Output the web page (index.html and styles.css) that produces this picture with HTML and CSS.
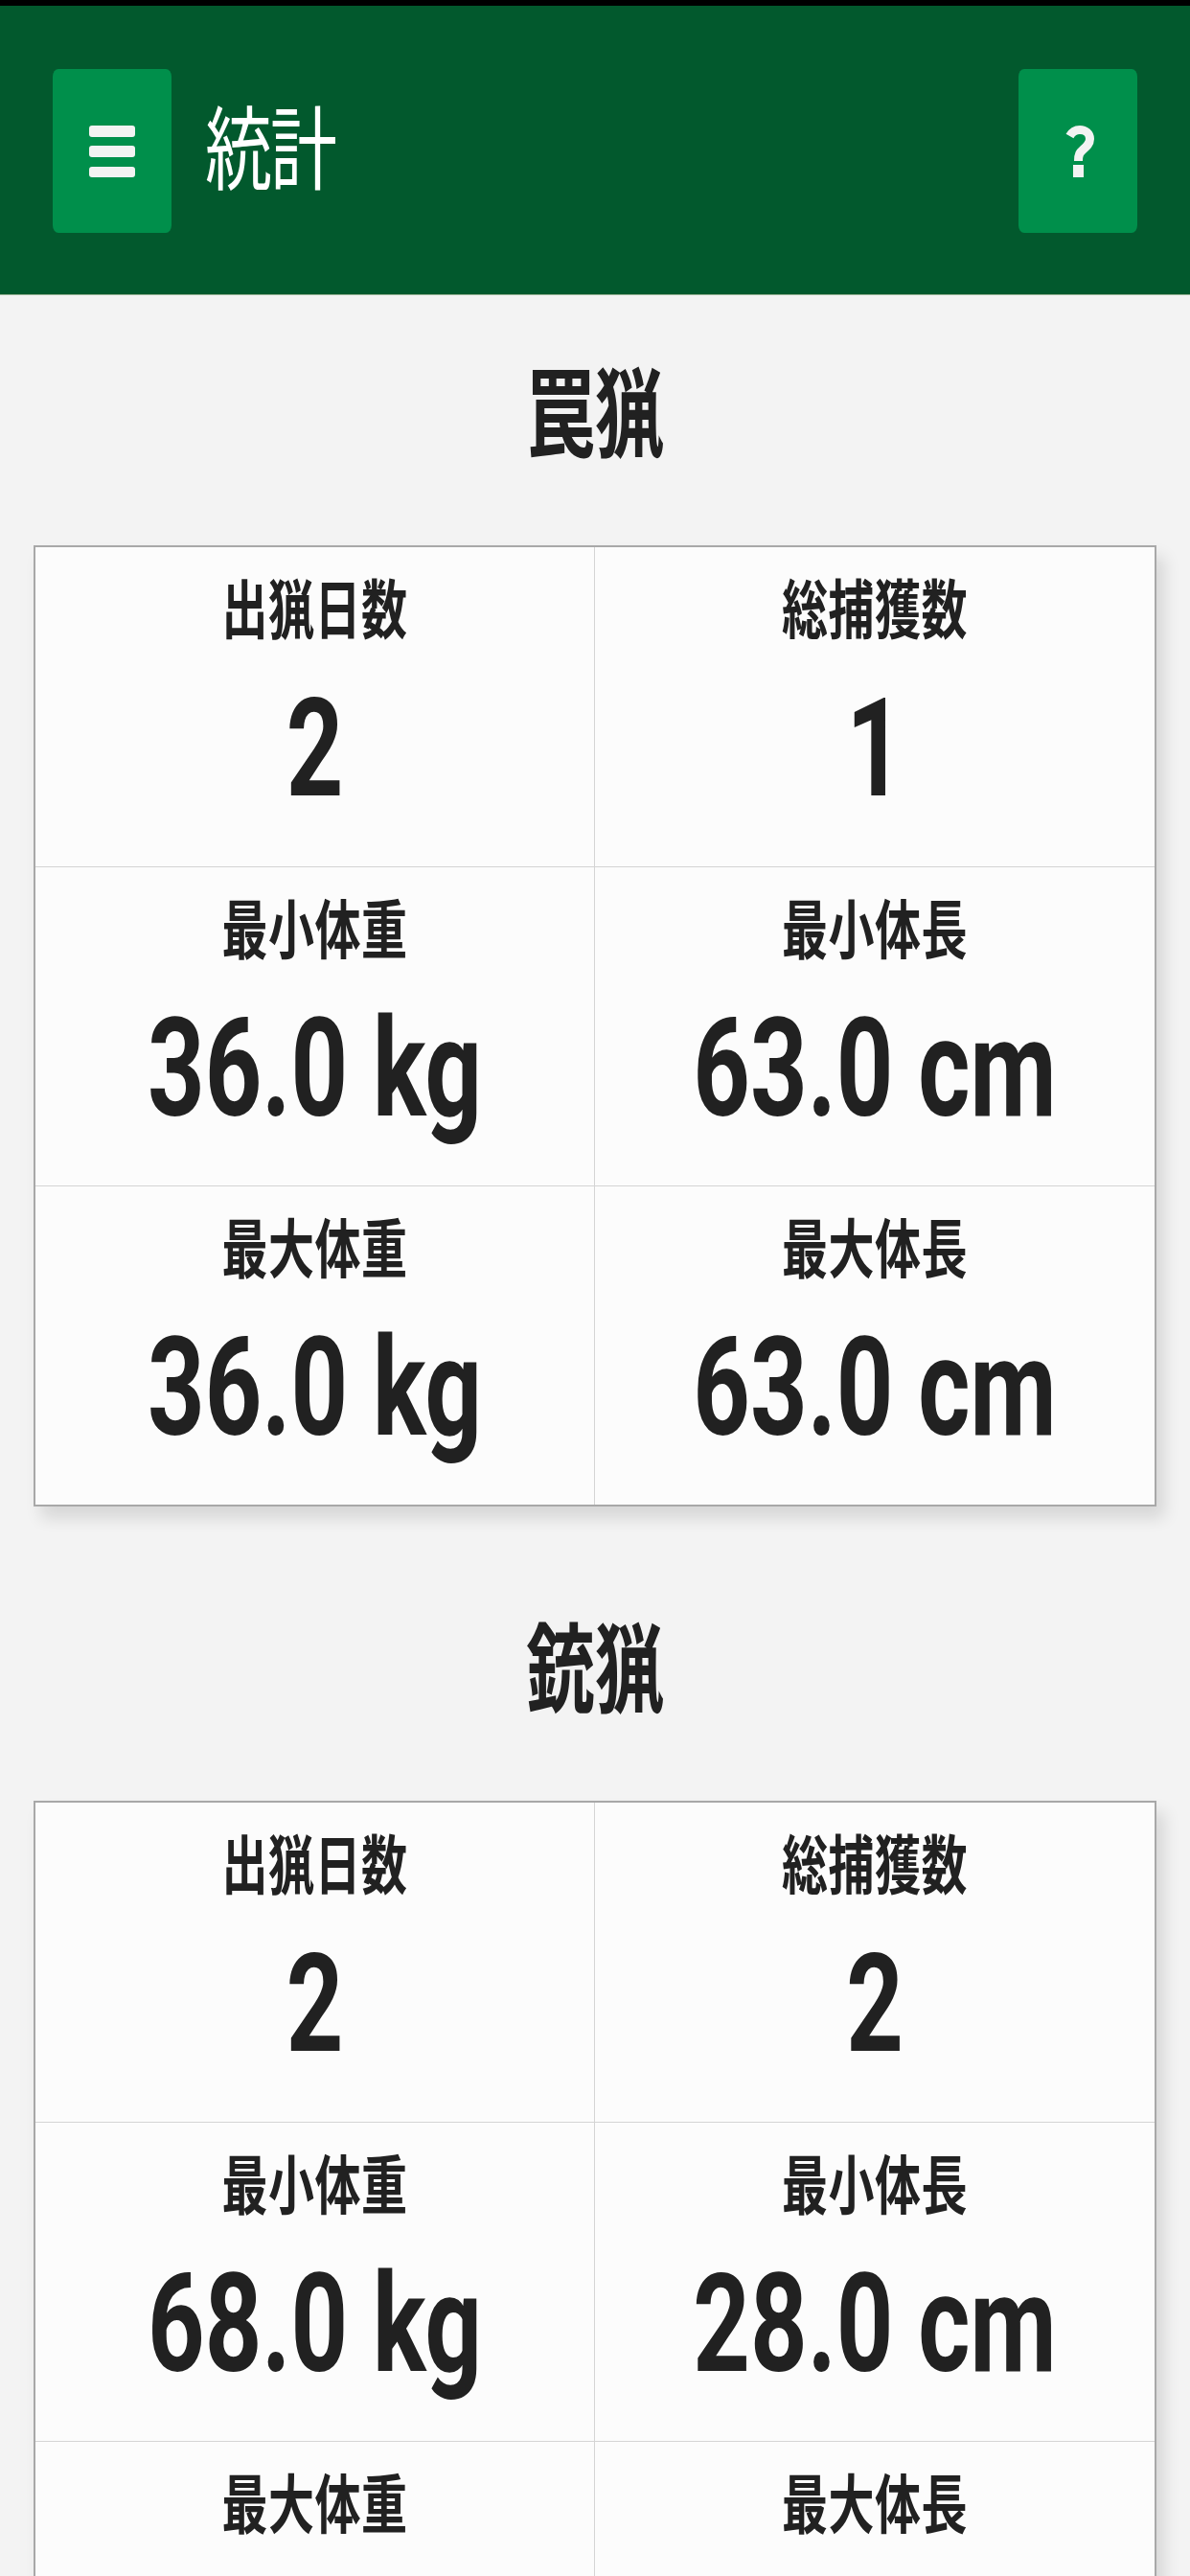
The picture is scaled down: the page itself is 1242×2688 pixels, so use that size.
FILE: index.html
```html
<!DOCTYPE html>
<html lang="ja">
<head>
<meta charset="utf-8">
<title>統計</title>
<link rel="stylesheet" href="styles.css">
</head>
<body>
<div class="statusbar"></div>
<header class="appbar">
  <button class="iconbtn" aria-label="menu">
    <svg class="burger" viewBox="0 0 48 54"><rect x="0" y="0" width="48" height="12" rx="3"/><rect x="0" y="21" width="48" height="12" rx="3"/><rect x="0" y="43" width="48" height="11" rx="3"/></svg>
  </button>
  <h1 class="apptitle"><span class="stretch">統計</span></h1>
  <button class="iconbtn" aria-label="help">
    <svg class="qicon" viewBox="0 0 30 54"><path class="qhook" d="M4.5 11C7 6.5 10.5 4.5 15 4.5C21 4.5 25.5 8.5 25.5 14C25.5 19 22 22 18.5 25C15 28 13.5 30 13.5 37"/><rect class="qdot" x="8" y="41" width="11" height="13"/></svg>
  </button>
</header>
<main class="content">
  <section class="group">
    <h2 class="grouptitle"><span class="stretch">罠猟</span></h2>
    <div class="card">
      <div class="cell"><div class="label"><span class="stretch">出猟日数</span></div><div class="value"><span class="stretch">2</span></div></div>
      <div class="cell"><div class="label"><span class="stretch">総捕獲数</span></div><div class="value"><span class="stretch">1</span></div></div>
      <div class="cell"><div class="label"><span class="stretch">最小体重</span></div><div class="value"><span class="stretch">36.0 kg</span></div></div>
      <div class="cell"><div class="label"><span class="stretch">最小体長</span></div><div class="value"><span class="stretch">63.0 cm</span></div></div>
      <div class="cell"><div class="label"><span class="stretch">最大体重</span></div><div class="value"><span class="stretch">36.0 kg</span></div></div>
      <div class="cell"><div class="label"><span class="stretch">最大体長</span></div><div class="value"><span class="stretch">63.0 cm</span></div></div>
    </div>
  </section>
  <section class="group">
    <h2 class="grouptitle"><span class="stretch">銃猟</span></h2>
    <div class="card">
      <div class="cell"><div class="label"><span class="stretch">出猟日数</span></div><div class="value"><span class="stretch">2</span></div></div>
      <div class="cell"><div class="label"><span class="stretch">総捕獲数</span></div><div class="value"><span class="stretch">2</span></div></div>
      <div class="cell"><div class="label"><span class="stretch">最小体重</span></div><div class="value"><span class="stretch">68.0 kg</span></div></div>
      <div class="cell"><div class="label"><span class="stretch">最小体長</span></div><div class="value"><span class="stretch">28.0 cm</span></div></div>
      <div class="cell"><div class="label"><span class="stretch">最大体重</span></div></div>
      <div class="cell"><div class="label"><span class="stretch">最大体長</span></div></div>
    </div>
  </section>
</main>
</body>
</html>
```
FILE: styles.css
```css
html, body {
  margin: 0;
  padding: 0;
  height: 2688px;
  overflow: hidden;
  background: #f3f3f3;
  font-family: Roboto, "Noto Sans CJK JP", sans-serif;
  color: #212121;
}
.stretch {
  display: inline-block;
  transform: scaleY(1.4);
  transform-origin: center;
  white-space: nowrap;
}
.statusbar {
  height: 6px;
  background: #000;
}
.appbar {
  box-sizing: border-box;
  height: 302px;
  background: #02592d;
  display: flex;
  align-items: flex-start;
  padding: 66px 55px 0;
  border-bottom: 1px solid #8fae8f;
}
.iconbtn {
  width: 124px;
  height: 171px;
  flex: none;
  border: 0;
  padding: 0;
  border-radius: 6px 6px 6px 6px / 8px 8px 8px 8px;
  background: #008f4b;
  display: flex;
  align-items: center;
  justify-content: center;
}
.burger {
  width: 48px;
  height: 54px;
  fill: #f3f3f3;
}
.qicon {
  width: 30px;
  height: 54px;
  margin-left: 4px;
}
.qhook {
  fill: none;
  stroke: #f3f3f3;
  stroke-width: 9;
}
.qdot {
  fill: #f3f3f3;
}
.apptitle {
  flex: 1;
  margin: 0 0 0 35px;
  font: 400 70px/155px "Noto Sans CJK JP", sans-serif;
  color: #fff;
  letter-spacing: -2px;
}
.apptitle .stretch {
  transform: scaleY(1.36);
}
.content {
  box-sizing: border-box;
  height: 2380px;
  overflow: hidden;
  padding: 0 35px;
}
.group {
  display: flex;
  flex-direction: column;
}
.grouptitle {
  margin: 0;
  height: 261px;
  text-align: center;
  font: 700 72px/236px "Noto Sans CJK JP", sans-serif;
  color: #212121;
}
.group + .group .grouptitle {
  height: 307px;
  line-height: 325px;
}
.card {
  display: grid;
  grid-template-columns: 1fr 1fr;
  grid-auto-rows: 333px;
  background: #fcfcfc;
  border: 2px solid #a8a8a8;
  box-sizing: border-box;
  box-shadow: 8px 12px 16px rgba(0, 0, 0, 0.12);
}
.cell {
  text-align: center;
  border-top: 1px solid #d4d4d4;
  display: flex;
  flex-direction: column;
  align-items: center;
}
.cell:nth-child(-n+2) {
  border-top: 0;
}
.cell:nth-child(odd) {
  border-right: 1px solid #d4d4d4;
}
.label {
  margin-top: 31px;
  font: 700 48px/60px "Noto Sans CJK JP", sans-serif;
  letter-spacing: 0.5px;
}
.value {
  margin-top: 50px;
  font: 700 104px/140px Roboto, sans-serif;
}
.value .stretch {
  transform: scaleY(1.37);
}
```
